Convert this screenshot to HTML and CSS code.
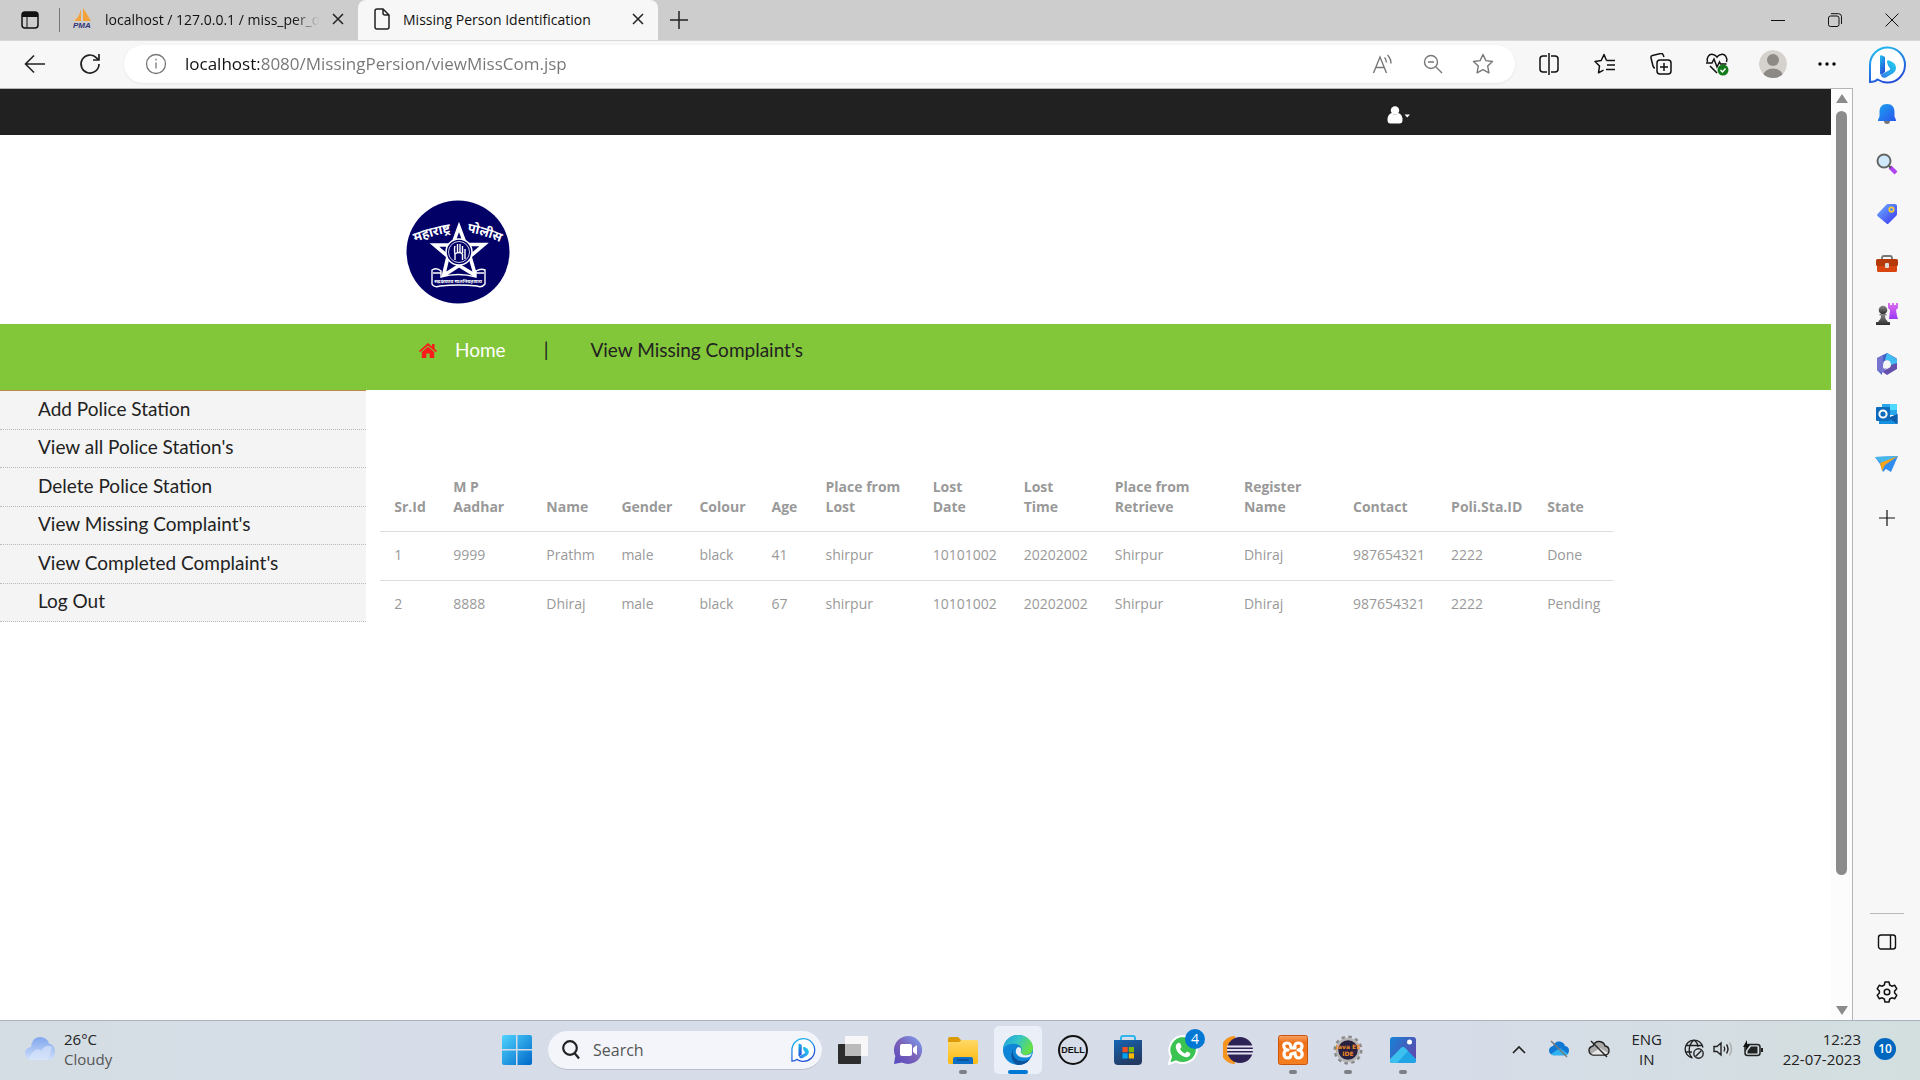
FILE: index.html
```html
<!DOCTYPE html>
<html lang="en">
<head>
<meta charset="utf-8">
<title>Missing Person Identification</title>
<link rel="stylesheet" href="styles.css">
</head>
<body>
<svg class="defs" width="0" height="0" aria-hidden="true">
  <defs>
    <linearGradient id="g-bing" x1="0" y1="0" x2="0.4" y2="1"><stop offset="0" stop-color="#1fc3f0"/><stop offset="1" stop-color="#2450d8"/></linearGradient>
    <linearGradient id="g-bing2" x1="1" y1="0" x2="0" y2="1"><stop offset="0" stop-color="#22d3ee"/><stop offset="1" stop-color="#2f7be8"/></linearGradient>
    <linearGradient id="g-win" x1="0" y1="0" x2="1" y2="1"><stop offset="0" stop-color="#4fd4ff"/><stop offset="1" stop-color="#0067c8"/></linearGradient>
    <linearGradient id="g-cloud" x1="0" y1="0" x2="0" y2="1"><stop offset="0" stop-color="#7fa6ee"/><stop offset="1" stop-color="#cfdff9"/></linearGradient>
    <linearGradient id="g-tag" x1="0" y1="0" x2="1" y2="1"><stop offset="0" stop-color="#6fb2ff"/><stop offset="1" stop-color="#3a35f0"/></linearGradient>
    <linearGradient id="g-bell" x1="0" y1="0" x2="1" y2="1"><stop offset="0" stop-color="#1aa3ee"/><stop offset="1" stop-color="#2b55ee"/></linearGradient>
    <linearGradient id="g-chat" x1="0" y1="1" x2="1" y2="0"><stop offset="0" stop-color="#5548c0"/><stop offset="0.5" stop-color="#7c62b8"/><stop offset="1" stop-color="#7ba4f5"/></linearGradient>
    <linearGradient id="g-edge" x1="0" y1="0" x2="1" y2="0.4"><stop offset="0" stop-color="#1c9de0"/><stop offset="0.5" stop-color="#33c4c9"/><stop offset="1" stop-color="#64e04a"/></linearGradient>
    <linearGradient id="g-folder" x1="0" y1="0" x2="0" y2="1"><stop offset="0" stop-color="#ffd867"/><stop offset="1" stop-color="#fbb90f"/></linearGradient>
    <linearGradient id="g-store" x1="0" y1="0" x2="0.5" y2="1"><stop offset="0" stop-color="#1565b4"/><stop offset="1" stop-color="#233a63"/></linearGradient>
    <linearGradient id="g-photo" x1="0" y1="0" x2="1" y2="0.6"><stop offset="0" stop-color="#1583d6"/><stop offset="1" stop-color="#5a4bb0"/></linearGradient>
    <linearGradient id="g-orange" x1="0" y1="0" x2="0" y2="1"><stop offset="0" stop-color="#f7a468"/><stop offset="0.25" stop-color="#ee6f17"/><stop offset="1" stop-color="#f58021"/></linearGradient>
    <linearGradient id="g-rook" x1="0" y1="0" x2="0" y2="1"><stop offset="0" stop-color="#e06cf0"/><stop offset="1" stop-color="#9a3bf5"/></linearGradient>
    <linearGradient id="g-dark" x1="0" y1="0" x2="0" y2="1"><stop offset="0" stop-color="#8a8a8a"/><stop offset="1" stop-color="#2c2c2c"/></linearGradient>
    <symbol id="i-bing" viewBox="0 0 40 40">
      <path d="M3 37V20A17.500 17.500 0 1 1 20 37.500C16 37.500 13 36 10.500 34.500C8.500 36.500 5.500 37 3 37Z" fill="#fff" stroke="url(#g-bing)" stroke-width="2"/>
      <path d="M14 10l4 2v15l-4 3c-1-1-1-2-1-3V11z" fill="url(#g-bing)"/>
      <path d="M20 17c0-1.500 1-2 2-1.500 4 1.500 7 3.500 7 7.500 0 3-2 5-5 6.500l-5 3c-3 1-5-.5-5-2.500l4-2.500 4.500-2.500c1-.5 1-1.500 0-2.200L21 20.500z" fill="url(#g-bing2)"/>
    </symbol>
    <symbol id="i-close" viewBox="0 0 16 16"><path d="M3 3l10 10M13 3L3 13" fill="none" stroke="currentColor" stroke-width="1.500"/></symbol>
  </defs>
</svg>

<div class="window">
  <header class="tabstrip">
    <button class="ib workspace" aria-label="Tab actions"><svg width="18" height="18" viewBox="0 0 18 18"><rect x="1" y="1" width="16" height="16" rx="3" fill="none" stroke="#111" stroke-width="1.500"/><path d="M1 6V4q0-3 3-3h10q3 0 3 3v2z" fill="#111"/><path d="M6 6v11" stroke="#111"/></svg></button>
    <span class="tab-sep"></span>
    <div class="tab">
      <svg width="22" height="22" viewBox="0 0 22 22"><path d="M9 1v12H2C6 10 8 6 9 1zM11 0c3 4 5 8 8 13h-8z" fill="#f6a23a"/><path d="M3 5v8h-1zM17 3v8" fill="#f8c98a"/><text x="1" y="20" class="pma">PMA</text></svg>
      <button class="tab-title faded">localhost / 127.0.0.1 / miss_per_d</button>
      <button class="ib small" aria-label="Close tab"><svg width="16" height="16"><use href="#i-close"/></svg></button>
    </div>
    <div class="tab active">
      <svg width="20" height="22" viewBox="0 0 20 22"><path d="M3 3q0-2 2-2h6l6 6v12q0 2-2 2H5q-2 0-2-2zM11 1v4q0 2 2 2h4" fill="none" stroke="#222" stroke-width="1.500"/></svg>
      <button class="tab-title">Missing Person Identification</button>
      <button class="ib small" aria-label="Close tab"><svg width="16" height="16"><use href="#i-close"/></svg></button>
    </div>
    <button class="ib newtab" aria-label="New tab"><svg width="18" height="18"><path d="M9 0v18M0 9h18" stroke="#222" stroke-width="1.500"/></svg></button>
    <div class="wincontrols">
      <button class="ib" aria-label="Minimise"><svg width="14" height="14"><path d="M0 7.500h14" stroke="#111"/></svg></button>
      <button class="ib" aria-label="Restore"><svg width="14" height="14" viewBox="0 0 14 14" fill="none" stroke="#111"><rect x=".5" y="3" width="10.500" height="10.500" rx="2"/><path d="M3 .7h7.500q3 0 3 3V11"/></svg></button>
      <button class="ib" aria-label="Close"><svg width="14" height="14"><path d="M.5 .5l13 13M13.500 .5l-13 13" stroke="#111"/></svg></button>
    </div>
  </header>

  <div class="body-row">
    <div class="main-col">
      <nav class="toolbar" aria-label="Browser toolbar">
        <button class="ib" aria-label="Back"><svg width="22" height="20" viewBox="0 0 22 20" fill="none" stroke="#222" stroke-width="1.600"><path d="M21 10H1.500M10 1.500L1.500 10l8.500 8.500"/></svg></button>
        <button class="ib" aria-label="Refresh"><svg width="22" height="22" viewBox="0 0 22 22" fill="none" stroke="#222" stroke-width="1.700"><path d="M20 11a9 9 0 1 1-2.500-6.200L20 7M20 1v6h-6"/></svg></button>
        <div class="address">
          <svg width="22" height="22" viewBox="0 0 22 22" fill="none" stroke="#777" stroke-width="1.300"><circle cx="11" cy="11" r="9.500"/><path d="M11 9.500v6M11 5.800v1.800"/></svg>
          <input class="url" type="text" aria-label="Address" value="localhost:8080/MissingPersion/viewMissCom.jsp">
          <button class="ib" aria-label="Read aloud"><svg width="22" height="22" viewBox="0 0 22 22" fill="none" stroke="#777" stroke-width="1.400"><path d="M1.500 20L8 4l6.500 16M4 14.500h8M12.500 4.500q2 2 2 5M15.500 2q3.500 3.500 3.500 8.500"/></svg></button>
          <button class="ib" aria-label="Zoom out"><svg width="20" height="20" viewBox="0 0 20 20" fill="none" stroke="#777" stroke-width="1.400"><circle cx="8" cy="8" r="6.500"/><path d="M13 13l6 6M5 8h6"/></svg></button>
          <button class="ib" aria-label="Add to favourites"><svg width="22" height="22" viewBox="0 0 22 22" fill="none" stroke="#777" stroke-width="1.400" stroke-linejoin="round"><path d="M11 1.500l2.900 6.100 6.600.9-4.800 4.600 1.200 6.700L11 16.600l-5.900 3.200 1.200-6.700L1.500 8.500l6.600-.9z"/></svg></button>
        </div>
        <div class="tools">
          <button class="ib" aria-label="Split screen"><svg width="20" height="22" viewBox="0 0 20 22" fill="none" stroke="#111" stroke-width="1.500"><path d="M10 0v22M8 3H4Q1 3 1 6v10q0 3 3 3h4M12 3h4q3 0 3 3v10q0 3-3 3h-4"/></svg></button>
          <button class="ib" aria-label="Favourites"><svg width="22" height="22" viewBox="0 0 22 22" fill="none" stroke="#111" stroke-width="1.500" stroke-linejoin="round"><path d="M12.500 7.500L10 1.500 7.200 7.500 1 8.500l4.500 4.600-1 6.700 5-2.600M12.500 7.500L21 7.500M13 12h8M12 16.500h9"/></svg></button>
          <button class="ib" aria-label="Collections"><svg width="22" height="22" viewBox="0 0 22 22" fill="none" stroke="#111" stroke-width="1.500"><rect x="7" y="7" width="14" height="14" rx="3"/><path d="M14 10v8M10 14h8M5 15q-1.500 0-2-2L1 5q-.5-2 1.500-2.500l8-2q2-.5 2.700 1.500l.8 2"/></svg></button>
          <button class="ib" aria-label="Browser essentials"><svg width="24" height="24" viewBox="0 0 24 24" fill="none" stroke="#111" stroke-width="1.500"><path d="M2.500 10C1 6 4 1.500 8 2.500q2.500.5 4 2.700Q13.500 3 16 2.500c4-1 7 3.500 5.500 7.500M1 11h6l2-4 3 8 2.500-5 1 2h6M5 14l7 7"/><circle cx="18" cy="18" r="5.500" fill="#137a1c" stroke="none"/><path d="M15.500 18l2 2 3-3.500" stroke="#fff"/></svg></button>
          <button class="ib" aria-label="Profile"><svg width="28" height="30" viewBox="0 0 28 30"><defs><clipPath id="c-p"><circle cx="14" cy="15" r="14"/></clipPath></defs><g clip-path="url(#c-p)"><circle cx="14" cy="15" r="14" fill="#d5d2ce"/><circle cx="14" cy="11" r="6" fill="#8d8985"/><ellipse cx="14" cy="27" rx="10" ry="7.500" fill="#8d8985"/></g></svg></button>
          <button class="ib" aria-label="More"><svg width="18" height="4"><circle cx="2" cy="2" r="1.700"/><circle cx="9" cy="2" r="1.700"/><circle cx="16" cy="2" r="1.700"/></svg></button>
        </div>
      </nav>

      <div class="viewport">
        <div class="page">
          <div class="topbar">
            <button class="ib user" aria-label="Account"><svg width="23" height="18" viewBox="0 0 23 18" fill="#fff"><circle cx="8" cy="4.500" r="4.200"/><path d="M4.500 7q3.500 3.500 7 0 4 1.500 4 7 0 3.500-3 3.500h-9q-3 0-3-3.500 0-5.500 4-7zM17.500 8.500h5.500l-2.700 3z"/></svg></button>
          </div>
          <div class="brand">
            <svg width="104" height="104" viewBox="0 0 104 104" role="img" aria-label="Maharashtra Police">
              <circle cx="52" cy="52" r="51.500" fill="#020066"/>
              <defs><path id="arc-l" d="M9 42Q28 35 46 32"/><path id="arc-r" d="M61 32Q78 35 96 43"/></defs>
              <text class="deva"><textPath href="#arc-l">महाराष्ट्र</textPath></text>
              <text class="deva"><textPath href="#arc-r">पोलीस</textPath></text>
              <path d="M53 27l6.500 17.500H78L64 56.500l5.500 19L53 65.500 37.500 75.500 42 56.500 28.500 45h18z" fill="#020066" stroke="#fff" stroke-width="3.600"/>
              <circle cx="53" cy="52" r="13" fill="#020066" stroke="#fff" stroke-width="1.500"/><circle cx="53" cy="52" r="10.500" fill="none" stroke="#cfcfe6"/>
              <path d="M49 60v-6q-1-5 0-8M51.500 53v-9M54 53v-9M56.500 53v-7M49 54q4-3 7.500 0v6M59 49v10" fill="none" stroke="#fff" stroke-width="1.400"/>
              <path d="M26 70q5-3 9 1v6q17-5 35 0v-6q5-3 9-1v14q-3 4-8 2-18-2-37 0-6 2-8-2z" fill="#020066" stroke="#fff" stroke-width="1.400"/>
              <path d="M27 73h8M70 73h8" stroke="#fff" stroke-width="1.500"/>
              <text x="52" y="83" text-anchor="middle" class="deva-sm">सद्रक्षणाय खलनिग्रहणाय</text>
            </svg>
          </div>
          <nav class="crumbs" aria-label="Page">
            <a class="home" href="#"><svg width="18" height="15" viewBox="0 0 18 15" fill="#f81b1b"><path d="M9 0l4 3.500V1h2.500v4.600L18 8l-1 1.200L9 2.400 1 9.200 0 8z"/><path d="M9 3.800l6.200 5.300V15h-4.500v-4.500H7.300V15H2.800V9.100z"/></svg><span>Home</span></a>
            <span class="bar">|</span>
            <a href="#">View Missing Complaint's</a>
          </nav>
          <div class="content">
            <ul class="menu">
              <li><a href="#">Add Police Station</a></li>
              <li><a href="#">View all Police Station's</a></li>
              <li><a href="#">Delete Police Station</a></li>
              <li><a href="#">View Missing Complaint's</a></li>
              <li><a href="#">View Completed Complaint's</a></li>
              <li><a href="#">Log Out</a></li>
            </ul>
            <div class="table-wrap">
              <table>
                <colgroup><col class="w-id"><col class="w-aadhar"><col class="w-name"><col class="w-gender"><col class="w-colour"><col class="w-age"><col class="w-lost"><col class="w-date"><col class="w-date"><col class="w-retrieve"><col class="w-register"><col class="w-contact"><col class="w-station"><col class="w-state"></colgroup>
                <thead><tr><th>Sr.Id</th><th>M P<br>Aadhar</th><th>Name</th><th>Gender</th><th>Colour</th><th>Age</th><th>Place from<br>Lost</th><th>Lost<br>Date</th><th>Lost<br>Time</th><th>Place from<br>Retrieve</th><th>Register<br>Name</th><th>Contact</th><th>Poli.Sta.ID</th><th>State</th></tr></thead>
                <tbody>
                  <tr><td>1</td><td>9999</td><td>Prathm</td><td>male</td><td>black</td><td>41</td><td>shirpur</td><td>10101002</td><td>20202002</td><td>Shirpur</td><td>Dhiraj</td><td>987654321</td><td>2222</td><td>Done</td></tr>
                  <tr><td>2</td><td>8888</td><td>Dhiraj</td><td>male</td><td>black</td><td>67</td><td>shirpur</td><td>10101002</td><td>20202002</td><td>Shirpur</td><td>Dhiraj</td><td>987654321</td><td>2222</td><td>Pending</td></tr>
                </tbody>
              </table>
            </div>
          </div>
        </div>
        <div class="scroll">
          <svg width="12" height="10"><path d="M6 0l6 9H0z" fill="#8b8b8b"/></svg>
          <div class="track"><div class="thumb"></div></div>
          <svg width="12" height="10"><path d="M6 9l6-9H0z" fill="#8b8b8b"/></svg>
        </div>
      </div>
    </div>

    <aside class="side">
      <button class="ib bing" aria-label="Bing"><svg width="40" height="40"><use href="#i-bing"/></svg></button>
      <button class="ib" aria-label="Notifications"><svg width="20" height="22" viewBox="0 0 20 22"><path d="M7 18h6q0 3-3 3t-3-3z" fill="#777"/><path d="M10 1c5 0 7.500 3 7.500 8v4.500L19 17v1H1v-1l1.500-3.500V9c0-5 2.500-8 7.500-8z" fill="url(#g-bell)"/></svg></button>
      <button class="ib" aria-label="Search"><svg width="22" height="22" viewBox="0 0 22 22"><path d="M14 14l6 6" stroke="#b044f2" stroke-width="4"/><path d="M12 12l3 3" stroke="#555" stroke-width="2"/><circle cx="8" cy="8" r="6.500" fill="#cfe9fb" stroke="#666" stroke-width="2"/></svg></button>
      <button class="ib" aria-label="Shopping"><svg width="22" height="22" viewBox="0 0 22 22"><path d="M12 1h7q2 0 2 2v8q0 1-1 2l-7.500 7.500q-1 1-2 0L1.500 13q-1-1 0-2L10 2q1-1 2-1z" fill="url(#g-tag)"/><circle cx="15.500" cy="6.500" r="2.300" fill="#5c8af8" stroke="#fbd02c" stroke-width="1.600"/></svg></button>
      <button class="ib" aria-label="Tools"><svg width="24" height="20" viewBox="0 0 24 20"><path d="M7 6V4q0-2 2-2h6q2 0 2 2v2" fill="none" stroke="#777" stroke-width="1.800"/><rect x="2" y="9" width="20" height="9" rx="1.500" fill="#d8450f"/><rect x="1" y="5" width="22" height="7" rx="1.500" fill="#b6390a"/><rect x="10" y="9" width="4" height="5" rx="1" fill="#ddd"/></svg></button>
      <button class="ib" aria-label="Games"><svg width="24" height="24" viewBox="0 0 24 24"><path d="M13 1h2v2h2V1h2v2h2V1h2v5l-2 2 1 6 1 3h-9l1-9-2-2z" fill="url(#g-rook)"/><circle cx="8" cy="8" r="4.300" fill="url(#g-dark)"/><path d="M4.500 12h7v1.500H10q0 4 2.500 5.500V20H15v3H1v-3h2.500v-1Q6 17.500 6 13.500H4.500z" fill="url(#g-dark)"/></svg></button>
      <button class="ib" aria-label="Microsoft 365"><svg width="22" height="22" viewBox="0 0 22 22"><path d="M11 0l9 5v7l-6-1-3-4-5 7V22l-5-5V5z" fill="#3e63c4"/><path d="M11 0l9 5.500V12l-6-1q0-4-5-4z" fill="#40bdf3"/><path d="M21 5v11l-10 6-5-3.500 7-3.500q2-1 2-4z" fill="#6550ae"/><path d="M13 7l8-1v4l-6 2z" fill="#40bdf3"/><path d="M1 5.500L7 2v12q0 3 4 1l-5 5-5-3z" fill="#7773d0"/><circle cx="11" cy="11" r="3.800" fill="#f7f7f7"/></svg></button>
      <button class="ib" aria-label="Outlook"><svg width="22" height="22" viewBox="0 0 22 22"><rect x="6" y="1" width="15" height="11" fill="#28a8ea"/><rect x="14" y="1" width="7" height="6" fill="#50d9ff"/><path d="M3 11l9 4 9.500-4v10H3z" fill="#1490df"/><path d="M21.500 11v10L12 15z" fill="#0f5cab"/><rect x="0" y="4" width="14" height="14" rx="1" fill="#0f6cbd"/><circle cx="7" cy="11" r="3.600" fill="none" stroke="#fff" stroke-width="2"/></svg></button>
      <button class="ib" aria-label="Drop"><svg width="24" height="18" viewBox="0 0 24 18"><path d="M0 2L23 1 16 17l-5-3-3 3-3-8z" fill="#2f8df0"/><path d="M0 2L23 1 7 9z" fill="#45b7e8"/><path d="M23 1L5 8l2 8 3-6z" fill="#f5a31a"/></svg></button>
      <button class="ib plus" aria-label="Add"><svg width="16" height="16"><path d="M8 0v16M0 8h16" stroke="#111" stroke-width="1.200"/></svg></button>
      <span class="side-sep"></span>
      <button class="ib" aria-label="Hide sidebar"><svg width="20" height="18" viewBox="0 0 20 18" fill="none" stroke="#111" stroke-width="1.400"><rect x="1.500" y="2" width="17" height="14" rx="2.500"/><path d="M13.500 2v14"/></svg></button>
      <button class="ib" aria-label="Settings"><svg width="22" height="22" viewBox="0 0 22 22" fill="none" stroke="#111" stroke-width="1.500" stroke-linejoin="round"><path d="M9 1h4l.7 3 2.100 1.200 3-.9 2 3.500L18.600 10v2l2.200 2.200-2 3.500-3-.9-2.100 1.200L13 21H9l-.7-3-2.100-1.200-3 .9-2-3.500L3.400 12v-2L1.200 7.800l2-3.500 3 .9L8.300 4z"/><circle cx="11" cy="11" r="2.800"/></svg></button>
    </aside>
  </div>

  <footer class="taskbar">
    <div class="weather">
      <svg width="32" height="26" viewBox="0 0 32 26"><path d="M7 24q-6-1-6-7 0-5 6-6Q8 1 16 1q7 0 9 6.500 6 1 6 8.500 0 7-6 8z" fill="url(#g-cloud)"/><path d="M4 23q8-14 13-8 5-8 11-4-2 8-4 13H7z" fill="#dce8fb" opacity=".6"/></svg>
      <div><div>26°C</div><div class="dim">Cloudy</div></div>
    </div>
    <div class="apps">
      <button class="app" aria-label="Start"><svg width="30" height="30" viewBox="0 0 30 30"><path d="M0 2q0-2 2-2h12v14H0zM15.500 0H28q2 0 2 2v12H15.500zM0 15.500h14V30H2q-2 0-2-2zM15.500 15.500H30V28q0 2-2 2H15.500z" fill="url(#g-win)"/></svg></button>
      <div class="search">
        <svg width="18" height="20" viewBox="0 0 18 20" fill="none" stroke="#222" stroke-width="2.200"><circle cx="8" cy="8" r="6.800"/><path d="M12.500 13l4.500 5.500"/></svg>
        <input type="text" aria-label="Search" placeholder="Search">
        <svg width="26" height="26"><use href="#i-bing"/></svg>
      </div>
      <button class="app" aria-label="Task view"><svg width="30" height="28" viewBox="0 0 30 28"><rect x="0" y="8" width="23" height="20" rx="1" fill="#2d2d2d"/><rect x="7" y="0" width="23" height="20" rx="1" fill="#f7f7f7"/><path d="M7 8h16v12H7z" fill="#bbb"/></svg></button>
      <button class="app" aria-label="Chat"><svg width="30" height="28" viewBox="0 0 30 28"><path d="M15 0a14 14 0 1 1-6 26.600L1 28l1.300-8A14 14 0 0 1 15 0z" fill="url(#g-chat)"/><rect x="7" y="8" width="12" height="12" rx="2" fill="#fff"/><path d="M20 12l4-3v10l-4-3z" fill="#fff"/></svg></button>
      <button class="app" aria-label="File Explorer"><svg width="30" height="27" viewBox="0 0 30 27"><path d="M0 2q0-2 2-2h8l3 3v6H0z" fill="#dd9a07"/><path d="M0 5h11l3-2h14q2 0 2 2v20q0 2-2 2H2q-2 0-2-2z" fill="url(#g-folder)"/><path d="M5 27v-5q0-2 2-2h16q2 0 2 2v5z" fill="#0f6fc6"/><path d="M9 23h12" stroke="#074a8c" stroke-width="1.500"/></svg><i class="run"></i></button>
      <button class="app current" aria-label="Microsoft Edge"><svg width="30" height="30" viewBox="0 0 30 30"><circle cx="15" cy="15" r="15" fill="#0f85d8"/><path d="M0 14C1 5 8 0 15 0c9 0 15 6 15 13 0 5-4 7-8 7-3 0-5-1-4-3 3-5-3-9-8-8C5 9 2 11 0 14z" fill="url(#g-edge)"/><path d="M11 13q-3 5 1 10 6 6 15 1-4 6-12 6C9 28 6 20 11 13z" fill="#0c539e"/><path d="M15 12q4 0 3 4-1 3 3 4 4 1 8-2-1 3-3 4-10 2-13-4-1-4 2-6z" fill="#e9eef8"/></svg><i class="run wide"></i></button>
      <button class="app" aria-label="Dell"><svg width="30" height="30" viewBox="0 0 30 30"><circle cx="15" cy="15" r="14" fill="none" stroke="#111" stroke-width="2"/><text x="15" y="18" text-anchor="middle" class="dell">DELL</text></svg></button>
      <button class="app" aria-label="Microsoft Store"><svg width="30" height="30" viewBox="0 0 30 30"><path d="M8 8V3q0-2 2-2h10q2 0 2 2v5" fill="none" stroke="#2fb5f0" stroke-width="2"/><path d="M1 5h28v21q0 4-4 4H5q-4 0-4-4z" fill="url(#g-store)"/><path d="M9.500 12h5.200v5.200H9.500z" fill="#f25022"/><path d="M15.800 12H21v5.200h-5.200z" fill="#7fba00"/><path d="M9.500 18.300h5.200v5.200H9.500z" fill="#00a4ef"/><path d="M15.800 18.300H21v5.200h-5.200z" fill="#ffb900"/></svg></button>
      <button class="app" aria-label="WhatsApp"><svg width="30" height="30" viewBox="0 0 30 30"><path d="M15 1a14 13.500 0 1 1-7 25.300L1 29l2-7.500A14 14 0 0 1 15 1z" fill="#3bc452" stroke="#fff" stroke-width="2"/><path d="M10 8q2-1 3 2l.5 2-1.500 2q2 3.500 5 4.500l2-2 3 1.500q1 1-.5 3-2 2-6 .5-6-2.500-7.500-8Q7 9.500 10 8z" fill="#fff"/></svg><span class="badge">4</span></button>
      <button class="app" aria-label="Eclipse"><svg width="30" height="28" viewBox="0 0 30 28"><path d="M12 0a14 14 0 0 0 0 28" fill="#f7941e"/><circle cx="17" cy="14" r="13" fill="#2c2255"/><path d="M4 10.500h26M4 14h26M4 17.500h26" stroke="#e4e2f0" stroke-width="1.800"/></svg></button>
      <button class="app" aria-label="XAMPP"><svg width="30" height="30" viewBox="0 0 30 30"><rect x=".5" y=".5" width="29" height="29" rx="2" fill="url(#g-orange)" stroke="#c9560b"/><path d="M9 8q-4 0-3 4 1 3 4 3-4 0-4 4t4 4q3 0 3-4l4-1q0 5 4 5 4-1 3-5-1-3-4-3 4 0 4-4 0-3-4-3-4 0-3 5h-4q0-5-4-5z" fill="none" stroke="#fff" stroke-width="3.200" stroke-linejoin="round"/></svg><i class="run"></i></button>
      <button class="app" aria-label="Java EE IDE"><svg width="30" height="30" viewBox="0 0 30 30"><circle cx="15" cy="15" r="13" fill="none" stroke="#888" stroke-width="3" stroke-dasharray="3.400 3.400"/><circle cx="15" cy="15" r="11" fill="#27203f" stroke="#b5b5b5" stroke-width="2.500"/><text x="15" y="14" text-anchor="middle" class="java">Java EE</text><text x="15" y="21" text-anchor="middle" class="java">IDE</text></svg><i class="run"></i></button>
      <button class="app" aria-label="Photos"><svg width="26" height="26" viewBox="0 0 26 26"><rect width="26" height="26" rx="3" fill="url(#g-photo)"/><path d="M0 24L11 11q2-2 4 0l11 11v2q0 2-2 2H3q-3 0-3-2z" fill="#21a4e6"/><path d="M0 22L11 11q2-2 4 0l3 3L7 26H3q-3 0-3-4z" fill="#3cc0f0"/><circle cx="19.500" cy="5" r="2.500" fill="#fff"/></svg><i class="run"></i></button>
    </div>
    <div class="tray">
      <button class="ib" aria-label="Hidden icons"><svg width="14" height="9" fill="none" stroke="#222" stroke-width="1.700"><path d="M1 8l6-6 6 6"/></svg></button>
      <button class="ib" aria-label="OneDrive"><svg width="22" height="18" viewBox="0 0 22 18"><path d="M5 15q-4-1-4-4.500T5 6q2-5 6.500-4.500T17 6q4 .5 4 4.500T17 15z" fill="#0f78d4"/><path d="M3 14l9-6 8 6q-1 1.500-3 1.500H5z" fill="#30b1f0"/><path d="M3 1l16 16" stroke="#777" stroke-width="1.500"/></svg></button>
      <button class="ib" aria-label="Cloud sync off"><svg width="22" height="18" viewBox="0 0 22 18"><path d="M5 15q-4-1-4-4.500T5 6q2-5 6.500-4.500T17 6q4 .5 4 4.500T17 15z" fill="#aaa" stroke="#222" stroke-width="1.400"/><path d="M3 14l9-6 8 5-3 1.500H5z" fill="#e8e8e8"/><path d="M3 1l16 16" stroke="#222" stroke-width="1.500"/></svg></button>
      <div class="lang">ENG<br>IN</div>
      <button class="status" aria-label="Network, volume and battery">
        <svg width="20" height="20" viewBox="0 0 20 20" fill="none" stroke="#222" stroke-width="1.400"><path d="M8.500 19A9 9 0 1 1 19 8.500M8 19C4 14 4 6 10 1c2.500 2 4 4.500 4 7M2 6.500h16M2 13h6"/><circle cx="14.500" cy="14.500" r="4.700"/><path d="M11.500 17.500l6-6"/></svg>
        <svg width="20" height="16" viewBox="0 0 20 16" fill="none" stroke="#222" stroke-width="1.400"><path d="M1 5.500h3L8 2v12l-4-3.500H1zM11 5.500q1.500 2.500 0 5M13.500 3.500q3 4.500 0 9"/><path d="M16.500 1.500q4 6.500 0 13" stroke="#aaa"/></svg>
        <svg width="22" height="18" viewBox="0 0 22 18"><rect x="3" y="4.500" width="15" height="11" rx="2.500" fill="none" stroke="#222" stroke-width="1.500"/><path d="M5.500 13.500V11L9 6.500h6.500v7zM19 8h2v4h-2z" fill="#222"/><path d="M5 0L1 7h3l-1 5 5-7H5z" fill="#111"/></svg>
      </button>
      <div class="clock">12:23<br>22-07-2023</div>
      <span class="count">10</span>
    </div>
  </footer>
</div>
</body>
</html>
```
FILE: styles.css
```css
* { box-sizing: border-box; }
body { margin: 0; font-family: "Open Sans", "Noto Sans", sans-serif; color: #222; }
button, input { font: inherit; color: inherit; border: 0; padding: 0; margin: 0; background: none; outline: 0; }
svg { display: block; flex: none; }
a { color: inherit; text-decoration: none; }
.defs { position: absolute; }
.ib { display: flex; align-items: center; justify-content: center; flex: none; }

.window { display: flex; flex-direction: column; height: 100vh; overflow: hidden; background: #f7f7f7; }

/* Tab strip */
.tabstrip { display: flex; align-items: center; height: 40px; flex: none; background: #cdcdcd; font-size: 14px; }
.workspace { width: 59px; }
.tab-sep { width: 1px; height: 24px; background: #777; }
.tab { display: flex; align-items: center; gap: 11px; width: 298px; height: 40px; padding: 0 12px 2px; }
.tab.active { width: 300px; background: #f7f7f7; border-radius: 8px 8px 0 0; }
.tab.active { padding-left: 14px; }
.tab-title { flex: 1; min-width: 0; overflow: hidden; white-space: nowrap; text-align: left; color: #111; }
.faded { -webkit-mask-image: linear-gradient(90deg, #000 88%, transparent); mask-image: linear-gradient(90deg, #000 88%, transparent); }
.small { width: 16px; }
.newtab { width: 42px; }
.wincontrols { display: flex; margin-left: auto; }
.wincontrols .ib { width: 57px; height: 38px; }
.pma { font: italic bold 8px "Liberation Sans", sans-serif; fill: #33357a; }

.body-row { display: flex; flex: 1; min-height: 0; }
.main-col { display: flex; flex-direction: column; flex: 1; min-width: 0; }

/* Browser toolbar */
.toolbar { display: flex; align-items: center; height: 48px; flex: none; padding: 0 0 2px 7px; border-top: 1px solid #d9d9d9; }
.toolbar > .ib { width: 55px; }
.address { display: flex; align-items: center; flex: 1; height: 38px; margin-left: 7px; padding: 0 7px 0 21px; border-radius: 19px; background: #fff; box-shadow: 0 1px 3px #0001; }
.address .ib { width: 50px; }
.url { flex: 1; min-width: 0; margin-left: 18px; font-size: 17px; color: transparent; background: linear-gradient(90deg, #111 74px, #757575 74px); -webkit-background-clip: text; background-clip: text; }
.tools { display: flex; padding: 0 0 0 6px; }
.tools .ib { width: 56px; }
.tools .ib:last-child { width: 52px; }

/* Viewport and scrollbar */
.viewport { display: flex; flex: 1; min-height: 0; background: #fff; border-top: 1px solid #b5b5b5; border-right: 1px solid #b5b5b5; }
.page { flex: 1; min-width: 0; overflow: hidden; }
.scroll { display: flex; flex-direction: column; align-items: center; width: 21px; padding: 5px 0 4px; background: #fcfcfc; }
.track { flex: 1; width: 11px; margin: 7px 0; }
.thumb { height: 86%; border-radius: 6px; background: #8b8b8b; }

/* Web page */
.topbar { display: flex; justify-content: flex-end; height: 46px; padding: 6px 23% 0 0; background: #212121; }
.brand { height: 189px; padding: 65px 0 0 406px; }
.deva { font: bold 13px "Noto Sans Devanagari", "Noto Sans", sans-serif; fill: #fff; }
.deva-sm { font: bold 5px "Noto Sans Devanagari", "Noto Sans", sans-serif; fill: #fff; }
.crumbs { display: flex; align-items: flex-start; height: 66px; padding: 12px 0 0 419px; background: #82c639; font-family: Lato, sans-serif; font-size: 19px; line-height: 28px; }
.home { display: flex; align-items: center; gap: 18px; color: #fff; }
.bar { margin: 0 42px 0 38px; }
.content { display: flex; align-items: flex-start; }
.menu { display: flex; flex-direction: column; flex: none; width: 20%; height: 232px; margin: 0; padding: 0; list-style: none; background: #f4f4f4; border-top: 1px solid #b98a4a; font-family: Lato, sans-serif; font-size: 19px; line-height: 24px; }
.menu li { display: flex; flex: 1; align-items: center; padding: 0 38px 2px; border-bottom: 1px dotted #bbb; }
.table-wrap { flex: 1; padding: 75px 0 0 14px; }
table { width: 85%; table-layout: fixed; border-collapse: collapse; font-size: 14px; line-height: 20px; color: #999; }
th { padding: 12px 0 14px 14px; text-align: left; vertical-align: bottom; font-weight: 700; white-space: nowrap; }
td { height: 49px; padding: 0 0 2px 14px; border-top: 1px solid #ddd; white-space: nowrap; }
.w-id { width: 59px; }
.w-aadhar { width: 93px; }
.w-name { width: 75px; }
.w-gender { width: 78px; }
.w-colour { width: 72px; }
.w-age { width: 54px; }
.w-lost { width: 107px; }
.w-date { width: 91px; }
.w-retrieve { width: 129px; }
.w-register { width: 109px; }
.w-contact { width: 98px; }
.w-station { width: 96px; }
.w-state { width: 80px; }

/* Edge sidebar */
.side { display: flex; flex-direction: column; align-items: center; flex: none; width: 67px; padding-bottom: 3px; border-top: 1px solid #d9d9d9; }
.side .ib { width: 50px; height: 50px; }
.side .bing { height: 48px; }
.side .plus { height: 58px; }
.side-sep { width: 34px; height: 1px; margin: auto 0 3px; background: #bbb; }

/* Taskbar */
.taskbar { display: grid; grid-template-columns: 1fr auto 1fr; align-items: center; height: 60px; flex: none; padding-bottom: 1px; border-top: 1px solid #abb1bc; background: linear-gradient(90deg, #d4dde3, #d6dde9 25%, #d6dce8 75%, #d3dfdf); font-size: 15px; line-height: 20px; }
.weather { display: flex; align-items: center; gap: 8px; padding: 0 0 2px 24px; }
.dim { color: #555; }
.apps { display: flex; align-items: center; gap: 7px; }
.app { position: relative; display: flex; align-items: center; justify-content: center; width: 48px; height: 48px; border-radius: 5px; }
.current { background: #ebeff7; }
.run { position: absolute; bottom: 0; left: 20px; width: 8px; height: 4px; border-radius: 2px; background: #7d7f86; }
.run.wide { left: 14px; width: 20px; background: #0078d4; }
.badge { position: absolute; top: 3px; right: 2px; width: 20px; height: 20px; border-radius: 10px; background: #0078d4; color: #fff; font-size: 14px; }
.dell { font: bold 9px "Liberation Sans", sans-serif; fill: #111; }
.java { font: bold 6px "DejaVu Sans", sans-serif; fill: #f08a24; }
.search { display: flex; align-items: center; gap: 13px; width: 274px; height: 39px; padding: 0 6px 0 14px; border-radius: 20px; border-bottom: 1px solid #b9bfcc; background: #f3f5fa; }
.search input { flex: 1; min-width: 0; font-size: 16px; }
.search input::placeholder { color: #555; opacity: 1; }
.tray { display: flex; align-items: center; justify-content: flex-end; padding: 0 24px 2px 0; }
.tray > .ib { width: 40px; }
.lang { width: 56px; text-align: center; }
.status { display: flex; align-items: center; gap: 9px; margin: 0 19px 0 9px; }
.clock { text-align: right; }
.count { width: 22px; height: 22px; margin-left: 13px; border-radius: 11px; background: #0067c0; color: #fff; font-size: 12px; line-height: 22px; font-weight: 600; text-align: center; }
```
